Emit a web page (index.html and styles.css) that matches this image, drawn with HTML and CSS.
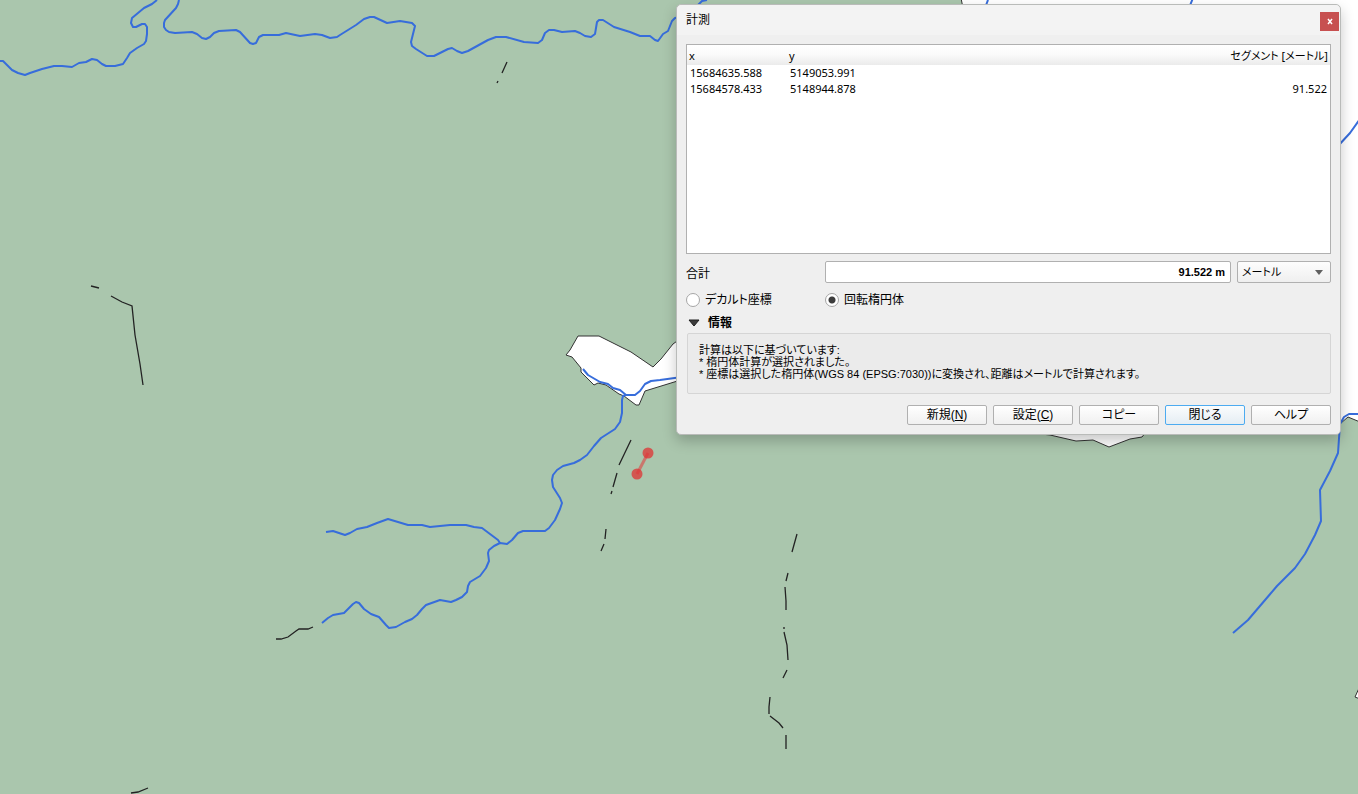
FILE: index.html
```
<!DOCTYPE html>
<html lang="ja">
<head>
    <meta charset="UTF-8">
    <meta name="viewport" content="width=device-width, initial-scale=1.0">
    <title>計測</title>
    <link rel="stylesheet" href="styles.css">
</head>
<body>
    <svg class="map" viewBox="0 0 1358 794" preserveAspectRatio="xMinYMin slice" aria-hidden="true">
        <!-- Areas outside the land polygon -->
        <g class="water">
            <path d="M961 -2L963 8L980 200L1020 400L1041 434L1050 435L1076 441L1093 440L1109 447L1130 439L1142 437L1146 432L1200 424L1341 423L1348 417L1360 422V-2Z"/>
            <path d="M578 336H599L631 352L653 367L661 359L673 344L684 336V379L645 391L639 405H636L624 396L619 394L606 385L598 383L594 385L581 372V368L572 357L566 355L570 350Z"/>
            <path d="M1360 686L1355 697L1360 699Z"/>
        </g>

        <!-- Rivers -->
        <g class="river">
            <path d="M0 61L3 61L7 65L12 70L18 73L25 75L30 73L42 69L54 66L62 66L72 67L79 63L86 62L92 59L97 60L102 64L106 66L115 66L123 64L127 58L130 53L137 48L144 44L146 41L147 34L147 27L145 24L142 24L136 27L133 27L131 23L132 18L144 8L152 4L157 0"/>
            <path d="M179 0L178 4L176 8L165 20L164 23L164 27L166 30L169 32L175 33L192 32L197 34L202 38L206 39L210 37L214 33L219 31L236 30L240 32L250 43L253 44L256 43L259 37L263 35L279 35L286 33L300 36L315 34L322 35L330 38L337 37L340 35L356 25L364 19L370 17L374 17L387 23L400 21L412 23L415 26L411 42L412 46L416 49L427 56L434 56L448 49L452 48L457 51L462 53L468 51L488 40L496 37L506 37L524 42L538 43L542 40L545 33L549 30L554 30L562 32L575 31L580 33L585 36L591 37L595 34L597 22L599 20L603 20L614 27L630 32L640 36L650 36L655 40L658 41L663 34L668 31L672 21L675 18L680 17L692 14L698 5L702 1L707 0"/>
            <path d="M988 0L985 8M1193 -2L1189 8"/>
            <path d="M1338 146L1350 133L1360 119"/>
            <path d="M583 369L588 375L600 382L608 384L613 388L620 390L626 395L635 395L640 391L645 384L651 381L660 380L682 377"/>
            <path d="M626 395L623 396L622 400L622 413L620 422L615 429L601 438L594 446L587 455L580 460L574 463L563 466L557 470L553 475L552 480L553 487L560 498L562 503L560 509L555 520L549 528L545 531L523 531L518 533L512 540L507 544L500 543L494 546L489 550L488 553L489 561L486 568L480 576L470 582L468 586L467 592L462 597L456 600L451 602L440 600L426 605L422 609L417 615L412 619L405 622L396 627L389 628L386 625L379 617L371 614L364 609L359 603L356 602L353 604L344 613L333 615L328 618L322 623"/>
            <path d="M326 532L333 531L345 535L350 533L357 529L367 527L377 523L388 519L408 525L422 525L430 527L450 525L466 525L474 527L482 528L490 534L498 540L500 543"/>
            <path d="M1360 414L1349 414L1344 417L1340 424L1338 453L1330 471L1320 490L1321 521L1315 535L1305 554L1295 568L1277 586L1248 620L1233 633"/>
        </g>

        <!-- Walls and embankments -->
        <g class="embankment">
            <path d="M507 62L502 73M498 81L497 83"/>
            <path d="M91 286L99 288M111 296L122 302L132 306L135 335L140 364L143 385"/>
            <path d="M631 440L619 465M617 473L613 487M612 491L611 494M606 529L605 539M604 544L601 551"/>
            <path d="M276 639H281L288 637L296 631L299 629H308L313 627"/>
            <path d="M797 534L792 552M788 573L786 581M785 587L786 601V610M784 627V629M784 632L787 645L788 660M787 670L783 678M770 697L769 707V714M770 716L779 723L783 728M786 735V749"/>
            <path d="M131 793L138 792L148 788"/>
        </g>

        <!-- Measured segment -->
        <g class="measure">
            <path d="M648 453L637 474"/>
            <circle cx="648" cy="453" r="5.5"/>
            <circle cx="637" cy="474" r="5.5"/>
        </g>
    </svg>

    <div class="dialog" role="dialog" aria-labelledby="dialogTitle">
        <div class="title-bar">
            <h1 id="dialogTitle">計測</h1>
            <button class="close-btn" type="button" aria-label="閉じる">
                <svg width="6" height="7" viewBox="0 0 6 7"><path d="M1 1L5 6M5 1L1 6"/></svg>
            </button>
        </div>

        <form class="dialog-body">
            <div class="table-box">
                <table>
                    <thead>
                        <tr><th>x</th><th>y</th><th class="segment">セグメント [メートル]</th></tr>
                    </thead>
                    <tbody>
                        <tr><td>15684635.588</td><td>5149053.991</td><td class="segment"></td></tr>
                        <tr><td>15684578.433</td><td>5148944.878</td><td class="segment">91.522</td></tr>
                    </tbody>
                </table>
            </div>

            <div class="total-row">
                <label for="total">合計</label>
                <input type="text" id="total" value="91.522 m" readonly>
                <div class="unit">
                    <select id="unit" aria-label="単位">
                        <option>メートル</option>
                    </select>
                    <svg width="8" height="5" viewBox="0 0 8 5"><path d="M0 0H8L4 5Z"/></svg>
                </div>
            </div>

            <div class="mode-row">
                <label><input type="radio" name="mode">デカルト座標</label>
                <label><input type="radio" name="mode" checked>回転楕円体</label>
            </div>

            <details open>
                <summary>
                    <svg width="12" height="8" viewBox="0 0 12 8"><path d="M1 1H11L6 7Z"/></svg>
                    情報
                </summary>
                <div class="info">
                    <p>計算は以下に基づいています:</p>
                    <p>* 楕円体計算が選択されました。</p>
                    <p>* 座標は選択した楕円体(WGS 84 (EPSG:7030))に変換され、距離はメートルで計算されます。</p>
                </div>
            </details>

            <div class="buttons">
                <button type="button">新規(<u>N</u>)</button>
                <button type="button">設定(<u>C</u>)</button>
                <button type="button">コピー</button>
                <button type="button" class="default">閉じる</button>
                <button type="button">ヘルプ</button>
            </div>
        </form>
    </div>
</body>
</html>
```
FILE: styles.css
```
:root {
    --land: #aac6ad;
    --river: #376ddb;
    --window: #efefef;
    --border: #b0b0b0;
}

* {
    margin: 0;
    padding: 0;
    box-sizing: border-box;
}

body {
    min-height: 100vh;
    overflow: hidden;
    background-color: var(--land);
    color: #000;
    font-family: "Liberation Sans", "Noto Sans CJK JP", sans-serif;
    font-size: 12px;
    font-feature-settings: "palt";
}

button,
input,
select {
    font: inherit;
    font-feature-settings: inherit;
    color: inherit;
}

/* Map canvas */
.map {
    display: block;
    width: 100%;
    height: 100vh;
}

.water {
    fill: white;
    stroke: #333;
    stroke-width: 1;
}

.river {
    fill: none;
    stroke: var(--river);
    stroke-width: 2;
    stroke-linejoin: round;
}

.embankment {
    fill: none;
    stroke: #232323;
    stroke-width: 1.3;
}

.measure path {
    stroke: rgb(222 67 67 / 0.6);
    stroke-width: 3;
}

.measure circle {
    fill: rgb(222 55 55 / 0.78);
}

/* Measure dialog */
.dialog {
    position: absolute;
    top: 4px;
    right: 17px;
    width: 665px;
    border: 1px solid #b9bbb9;
    border-radius: 5px;
    background-color: var(--window);
    box-shadow: 0 6px 14px rgb(0 0 0 / 0.22);
}

.title-bar {
    display: flex;
    justify-content: space-between;
    height: 30px;
    padding: 7px 1px 0 9px;
    border-radius: 5px 5px 0 0;
    background-color: #f3f3f3;
}

h1 {
    font-size: 12px;
    font-weight: normal;
    line-height: 16px;
}

.close-btn {
    width: 19px;
    height: 19px;
    border: none;
    background-color: #c75050;
}

.close-btn svg {
    display: block;
    margin: 0 auto;
    stroke: white;
    stroke-width: 1.5;
}

.dialog-body {
    padding: 9px;
}

.table-box {
    height: 210px;
    border: 1px solid var(--border);
    background-color: white;
    font-family: "Noto Sans", "Noto Sans CJK JP", sans-serif;
    font-size: 11px;
}

table {
    width: 100%;
    border-collapse: collapse;
    table-layout: fixed;
}

th,
td {
    width: 100px;
    height: 16px;
    padding: 0 3px;
    font-weight: normal;
    line-height: 16px;
    text-align: left;
}

th {
    height: 20px;
    padding: 2px 2px 0;
    background: linear-gradient(#fff, #fafafa 50%, #ebebeb);
}

.segment {
    width: auto;
    text-align: right;
}

.total-row {
    display: flex;
    align-items: center;
    gap: 6px;
    margin-top: 7px;
}

.total-row label {
    width: 133px;
}

.total-row input {
    flex: 1;
    min-width: 0;
    height: 22px;
    padding: 0 5px;
    border: 1px solid var(--border);
    border-radius: 2px;
    background-color: white;
    font-size: 11px;
    font-weight: bold;
    text-align: right;
}

.unit {
    display: flex;
    align-items: center;
    width: 94px;
}

.unit select {
    width: 100%;
    height: 22px;
    padding: 0 4px;
    border: 1px solid var(--border);
    border-radius: 2px;
    background: linear-gradient(#fdfdfd, #efefef);
    appearance: none;
    font-size: 11px;
}

.unit svg {
    margin-left: -16px;
    fill: #606060;
    pointer-events: none;
}

.mode-row {
    display: flex;
    height: 14px;
    margin-top: 10px;
}

.mode-row label {
    display: flex;
    align-items: center;
    gap: 5px;
    width: 139px;
    line-height: 14px;
}

.mode-row input {
    width: 14px;
    height: 14px;
    border: 1px solid #a6a6a6;
    border-radius: 50%;
    background-color: white;
    appearance: none;
}

.mode-row input:checked {
    background: radial-gradient(circle, #3c3c3c 3px, white 4px);
}

summary {
    display: flex;
    align-items: center;
    gap: 8px;
    height: 16px;
    margin-top: 8px;
    padding-left: 2px;
    font-weight: bold;
    line-height: 16px;
    list-style: none;
}

summary svg {
    fill: #3c3c3c;
    stroke: #1e1e1e;
}

.info {
    height: 61px;
    margin: 2px 0 0 1px;
    padding: 10px 11px;
    border: 1px solid #d5d5d5;
    border-radius: 2px;
    background-color: #ebebeb;
    font-size: 11px;
    line-height: 12px;
}

.buttons {
    display: flex;
    justify-content: flex-end;
    gap: 6px;
    margin-top: 11px;
}

.buttons button {
    width: 80px;
    height: 20px;
    border: 1px solid var(--border);
    border-radius: 2px;
    background: linear-gradient(#fff, #f0f0f0);
    line-height: 16px;
}

.buttons .default {
    border-color: #4dabf0;
    background: linear-gradient(#fafcfd, #e5edf3);
}
```
